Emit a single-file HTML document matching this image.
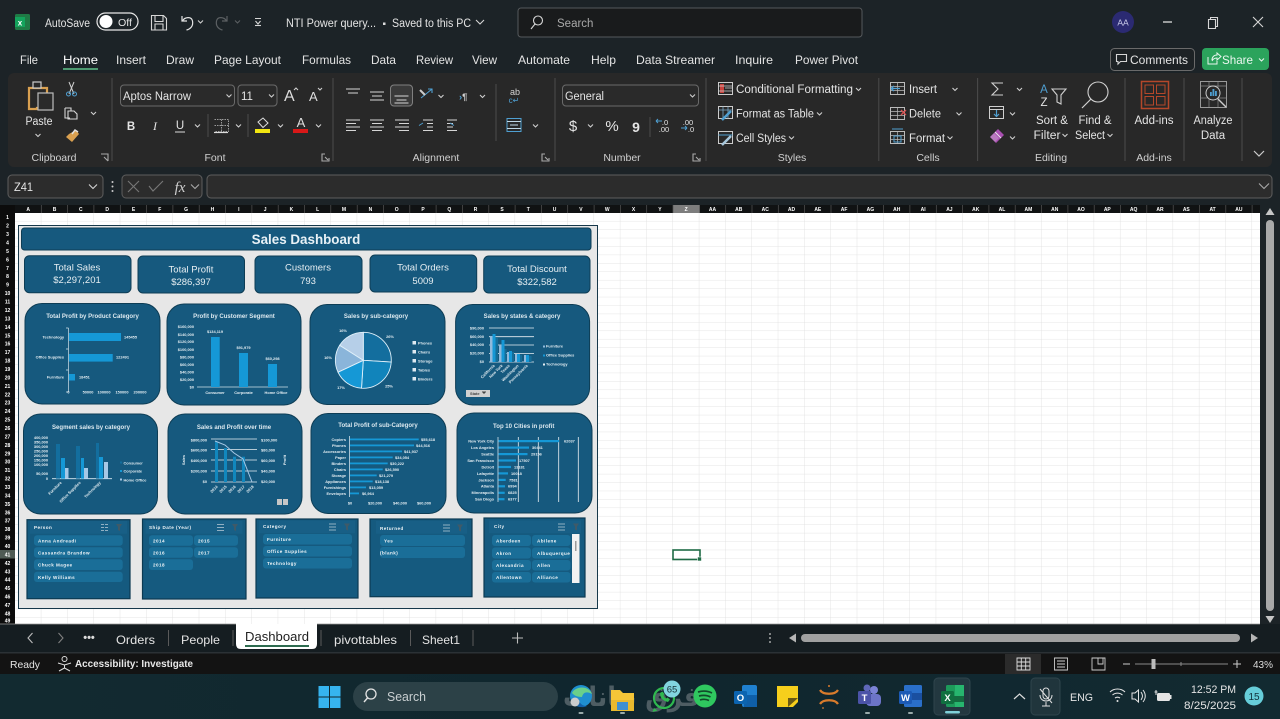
<!DOCTYPE html>
<html><head><meta charset="utf-8"><title>Excel Dashboard</title>
<style>
html,body{margin:0;padding:0;width:1280px;height:719px;overflow:hidden;background:#1c2327}
svg{display:block;position:absolute;left:0;top:0;filter:blur(.35px)}
text{font-family:"Liberation Sans","DejaVu Sans",sans-serif;fill:#e4e4e4;font-size:12px}
.m{text-anchor:middle}.e{text-anchor:end}
.s{font-size:11.5px}
.g{font-size:10.5px;fill:#d0d0d0;text-anchor:middle}
.h{font-size:5px;font-weight:bold;fill:#fff;text-anchor:middle}
.r{font-size:5px;font-weight:bold;fill:#fff;text-anchor:middle}
.ic{fill:none;stroke:#d6d6d6;stroke-width:1.1}
.ch{fill:none;stroke:#cfcfcf;stroke-width:1.1}
.sep{stroke:#4c4c4c;stroke-width:1}
.ca{fill:#16597e;stroke:#0e3d55;stroke-width:1}
.ti{font-size:6.05px;font-weight:bold;fill:#dbe8ef;text-anchor:middle}
.x{font-size:3.9px;font-weight:bold;fill:#e3edf2}
.k{font-size:9.5px;fill:#e6eef2;text-anchor:middle}
.it{fill:#1a6e98}
.sl{fill:#155a7f;stroke:#0c3a52;stroke-width:1.2}
.st{font-size:4.6px;font-weight:bold;fill:#f0f5f8;letter-spacing:.45px}
.b{fill:#1598d6}
.gl{stroke:#e8eef2;stroke-width:.8}
</style></head><body>
<svg width="1280" height="719" viewBox="0 0 1280 719" xmlns="http://www.w3.org/2000/svg">
<defs>
<pattern id="gp" x="15" y="213" width="26.32" height="8.43" patternUnits="userSpaceOnUse"><rect width="26.32" height="8.43" fill="#fff"/><path d="M26.32 0V8.43M0 8.43H26.32" stroke="#dedede" stroke-width=".8" fill="none"/></pattern>
<linearGradient id="tb" x1="0" x2="1" y1="0" y2="0"><stop offset="0" stop-color="#122a30"/><stop offset=".5" stop-color="#10262e"/><stop offset="1" stop-color="#122a31"/></linearGradient>
</defs>
<rect width="1280" height="719" fill="#1c2327"/>

<!-- title bar -->
<rect x="15" y="14" width="15" height="16" rx="1.5" fill="#1f7a45"/><rect x="15" y="17" width="10" height="10" fill="#14a35c"/><text x="20" y="25.5" class="m" style="font-size:8px;font-weight:bold;fill:#fff">x</text>
<text x="45" y="27" textLength="45" lengthAdjust="spacingAndGlyphs" style="font-size:11.5px">AutoSave</text>
<rect x="97" y="13" width="41" height="17" rx="8.5" fill="none" stroke="#e8e8e8" stroke-width="1.2"/><circle cx="106" cy="21.5" r="6.5" fill="#fff"/><text x="118" y="26" textLength="14" lengthAdjust="spacingAndGlyphs" style="font-size:10.5px">Off</text>
<path class="ic" d="M151.5 15.5h12l3 3v11.5h-15zM155 15.5v6h8v-6M155 30v-6h8v6"/>
<path d="M182 16v5h5M182.5 21c2-4 9-5 10-0s-2 8-6 9" fill="none" stroke="#e4e4e4" stroke-width="1.2"/><path class="ch" d="M198 20.5l2.5 2.5 2.5-2.5"/>
<path d="M227 16v5h-5M226.5 21c-2-4-9-5-10 0s2 8 6 9" fill="none" stroke="#5c6063" stroke-width="1.2"/><path d="M235 20.5l2.5 2.5 2.5-2.5" fill="none" stroke="#5c6063"/>
<path class="ic" d="M255 18.5h6M255.5 21l2.5 3 2.5-3"/><path d="M255 25.5h6" class="ic"/>
<text x="286" y="27" textLength="90" lengthAdjust="spacingAndGlyphs" style="font-size:11.5px">NTI Power query...</text><rect x="383" y="22.5" width="2.5" height="2.5" fill="#ddd"/>
<text x="392" y="27" textLength="79" lengthAdjust="spacingAndGlyphs" style="font-size:11.5px">Saved to this PC</text><path class="ic" d="M476 20l4 4 4-4"/>
<rect x="518" y="8" width="344" height="29" rx="3" fill="#191b1c" stroke="#55595c"/>
<circle cx="538" cy="20.5" r="4.5" class="ic" stroke="#b0b0b0"/><path class="ic" d="M535 24l-4 5"/>
<text x="557" y="27" style="font-size:11.5px;fill:#a9a9a9">Search</text>
<circle cx="1123" cy="22" r="11" fill="#2b2a72"/><text x="1123" y="25.5" class="m" style="font-size:8.5px;fill:#cfd0ee">AA</text>
<path d="M1163 22h9" stroke="#ddd" stroke-width="1.3"/><path class="ic" d="M1208.5 19.5h7v9h-7zM1210.5 19.5v-2h7v9h-2"/><path class="ic" d="M1253 17l10 10M1263 17l-10 10" stroke-width="1.3"/>

<!-- tabs -->
<text x="20" y="64" textLength="18" lengthAdjust="spacingAndGlyphs">File</text>
<text x="63" y="64" textLength="35" lengthAdjust="spacingAndGlyphs" style="fill:#fff">Home</text>
<text x="116" y="64" textLength="30" lengthAdjust="spacingAndGlyphs">Insert</text>
<text x="166" y="64" textLength="28" lengthAdjust="spacingAndGlyphs">Draw</text>
<text x="214" y="64" textLength="67" lengthAdjust="spacingAndGlyphs">Page Layout</text>
<text x="302" y="64" textLength="49" lengthAdjust="spacingAndGlyphs">Formulas</text>
<text x="371" y="64" textLength="25" lengthAdjust="spacingAndGlyphs">Data</text>
<text x="416" y="64" textLength="37" lengthAdjust="spacingAndGlyphs">Review</text>
<text x="472" y="64" textLength="25" lengthAdjust="spacingAndGlyphs">View</text>
<text x="518" y="64" textLength="52" lengthAdjust="spacingAndGlyphs">Automate</text>
<text x="591" y="64" textLength="25" lengthAdjust="spacingAndGlyphs">Help</text>
<text x="636" y="64" textLength="79" lengthAdjust="spacingAndGlyphs">Data Streamer</text>
<text x="735" y="64" textLength="38" lengthAdjust="spacingAndGlyphs">Inquire</text>
<text x="795" y="64" textLength="63" lengthAdjust="spacingAndGlyphs">Power Pivot</text>
<rect x="63" y="68" width="35" height="2" fill="#4e9a71"/>
<rect x="1110.5" y="48.5" width="84" height="22" rx="4" fill="#1d2225" stroke="#6a6a6a"/>
<path class="ic" d="M1116.5 54.5h10v7h-6l-2.5 2.5v-2.5h-1.5z"/><text x="1130" y="64" textLength="58" lengthAdjust="spacingAndGlyphs">Comments</text>
<rect x="1202" y="48" width="67" height="22" rx="4" fill="#2ba35c"/>
<path d="M1208 57v7h9v-3M1212 60c0-3 2-5 5-5v-2l4 3.5-4 3.5v-2c-2 0-4 1-5 3" fill="none" stroke="#e8f5ee"/><text x="1222" y="64" textLength="31" lengthAdjust="spacingAndGlyphs" style="fill:#eaf6ef">Share</text><path d="M1259 58.5l2.5 2.5 2.5-2.5" fill="none" stroke="#eaf6ef"/>

<!-- ribbon -->
<rect x="8" y="73" width="1264" height="94" rx="6" fill="#282828"/>
<g class="sep"><path d="M112 78v83M333 78v83M555 78v83M706 78v83M878.8 78v83M977.6 78v83M1125 78v83M1184 78v83M1242 78v83M208 114v23M248 114v23M496 84v57M650 117v20"/></g>
<text class="g" x="54" y="161">Clipboard</text><text class="g" x="215" y="161">Font</text><text class="g" x="436" y="161">Alignment</text><text class="g" x="622" y="161">Number</text><text class="g" x="792" y="161">Styles</text><text class="g" x="928" y="161">Cells</text><text class="g" x="1051" y="161">Editing</text><text class="g" x="1154" y="161">Add-ins</text>
<g class="ic" stroke-width=".9" style="stroke:#aaa"><path d="M101 154h7v7M104 157l4 4M325 154h-3v7h7v-3M325 157l3 3M545 154h-3v7h7v-3M545 157l3 3M696 154h-3v7h7v-3M696 157l3 3"/></g>
<!-- clipboard -->
<path d="M29 88h18v20H37v1h-8z" fill="none" stroke="#d9a050" stroke-width="2.2"/><rect x="33" y="82" width="8" height="6" fill="#282828" stroke="#ccc" stroke-width="1.2"/><rect x="38" y="93" width="15" height="17" fill="#2a2a2a" stroke="#bdbdbd" stroke-width="1.2"/>
<text x="39" y="125" class="m" textLength="27" lengthAdjust="spacingAndGlyphs" style="font-size:11.5px">Paste</text><path class="ch" d="M35.5 134l2.5 2.5 2.5-2.5"/>
<path d="M69 82l5 12M74 82l-5 12" stroke="#cfcfcf" fill="none"/><circle cx="68.5" cy="94" r="2" fill="none" stroke="#4f9fd1"/><circle cx="74.5" cy="94" r="2" fill="none" stroke="#4f9fd1"/>
<path class="ic" d="M65 108v10h5M65 108h6v3M68 111h6l3 3v5h-9z"/><path class="ch" d="M91 112l2.5 2.5 2.5-2.5"/>
<path d="M66 137l6 5 7-8-3-4-7 4z" fill="#d9a050"/><path d="M72 134l3-4 3 2" fill="none" stroke="#e0e0e0" stroke-width="1.5"/>
<!-- font -->
<rect x="120.5" y="85" width="114" height="21" rx="3.5" fill="#2a2a2a" stroke="#6a6a6a"/><text x="123" y="100" textLength="68" lengthAdjust="spacingAndGlyphs" style="font-size:11.5px">Aptos Narrow</text><path class="ch" d="M226.5 94.5l2.5 2.5 2.5-2.5"/>
<rect x="238" y="85" width="39" height="21" rx="3.5" fill="#2a2a2a" stroke="#6a6a6a"/><text x="241" y="100" style="font-size:11.5px">11</text><path class="ch" d="M269 94.5l2.5 2.5 2.5-2.5"/>
<text x="284" y="101" style="font-size:16px;fill:#ddd">A</text><path class="ch" d="M294 90l2 -2 2 2" stroke="#c8c8c8"/><text x="309" y="101" style="font-size:13px;fill:#ddd">A</text><path class="ch" d="M318 88l2 2 2 -2"/>
<text x="131" y="130" class="m" style="font-weight:bold;font-size:11.5px">B</text><text x="155" y="130" class="m" style="font-style:italic;font-family:'Liberation Serif';font-size:12px">I</text><text x="180" y="129" class="m" style="font-size:11.5px">U</text><path d="M175 132h10" stroke="#ddd"/><path class="ch" d="M195 124.5l2.5 2.5 2.5-2.5M236 124.5l2.5 2.5 2.5-2.5M278 124.5l2.5 2.5 2.5-2.5M316 124.5l2.5 2.5 2.5-2.5"/>
<path d="M214.5 119.5h14v12h-14M221.5 119.5v12M214.5 125.5h14" fill="none" stroke="#9a9a9a" stroke-dasharray="1.5 1"/><path d="M214 132.5h14" stroke="#ddd" stroke-width="1.2"/>
<path d="M258 122l5-4 5 5-5 4.5z" fill="none" stroke="#ddd"/><rect x="255" y="129" width="15" height="4" fill="#f2e611"/>
<text x="301" y="127" class="m" style="font-size:13px;fill:#ddd">A</text><rect x="293" y="129" width="15" height="4" fill="#d81818"/>
<!-- alignment -->
<rect x="390.5" y="85" width="22" height="21" rx="3.5" fill="#3a3a3a" stroke="#808080"/>
<g class="ic"><path d="M346 89h14M348 93h10M370 92h14M372 96h10M370 100h14M394.5 96h14M396.5 100h10M394.5 103h14"/><path d="M346 120h14M346 123.5h10M346 127h14M346 130.5h10M370 120h14M372 123.5h10M370 127h14M372 130.5h10M395 120h14M399 123.5h10M395 127h14M399 130.5h10M423 120h10M423 130.5h10M427 123.5h6M427 127h6M447 120h10M447 130.5h10M447 123.5h6M447 127h6"/></g>
<path d="M419 125.5l4-2.5M454 125.5l-4-2.5" stroke="#4f9fd1" stroke-width="1" fill="none"/>
<path d="M421 98l11-9M428 89h4v4" fill="none" stroke="#4f9fd1" stroke-width="1.1"/><path d="M420 90l5 5" stroke="#ccc" stroke-width="2"/><path class="ch" d="M438.5 95l2.5 2.5 2.5-2.5M480 95l2.5 2.5 2.5-2.5M533 124.5l2.5 2.5 2.5-2.5"/>
<text x="459" y="100" style="font-size:9.5px;font-weight:bold;fill:#cfcfcf"><tspan fill="#4f9fd1">›</tspan>¶</text>
<text x="515" y="95" class="m" style="font-size:9px;fill:#d5d5d5">ab</text><text x="514" y="103" class="m" style="font-size:8px;fill:#4f9fd1">c↵</text>
<rect x="507" y="118.5" width="14" height="13" fill="none" stroke="#4f9fd1"/><path d="M507 121.5h14M507 128.5h14M510 125h8" fill="none" stroke="#bfd7e6"/>
<!-- number -->
<rect x="562.5" y="85" width="136" height="21" rx="3.5" fill="#2a2a2a" stroke="#6a6a6a"/><text x="565" y="100" textLength="39" lengthAdjust="spacingAndGlyphs" style="font-size:11.5px">General</text><path class="ch" d="M690 94.5l2.5 2.5 2.5-2.5"/>
<text x="573" y="131" class="m" style="font-size:15px">$</text><path class="ch" d="M588 124.5l2.5 2.5 2.5-2.5"/><text x="612" y="131" class="m" style="font-size:15px">%</text><text x="636" y="132" class="m" style="font-size:14px;font-weight:bold">9</text>
<text x="665" y="125" style="font-size:7.5px" class="m">.0</text><text x="664" y="132" style="font-size:7.5px" class="m">.00</text><path d="M662 121h-6M656 121l2-2M656 121l2 2" stroke="#4f9fd1" fill="none"/>
<text x="688" y="125" style="font-size:7.5px" class="m">.00</text><text x="691" y="132" style="font-size:7.5px" class="m">.0</text><path d="M681 128h6M687 128l-2-2M687 128l-2 2" stroke="#4f9fd1" fill="none"/>
<!-- styles -->
<rect x="718.5" y="82.5" width="14" height="12" fill="none" stroke="#ccc"/><rect x="720" y="84" width="4" height="9" fill="#c8413c"/><path d="M725 88h7M718.5 86h14M718.5 91h14" stroke="#ccc" stroke-width=".7"/>
<text x="736" y="93" textLength="117" lengthAdjust="spacingAndGlyphs" style="font-size:11.5px">Conditional Formatting</text><path class="ch" d="M856 88l2.5 2.5 2.5-2.5"/>
<rect x="718.5" y="106.5" width="14" height="12" fill="none" stroke="#ccc"/><path d="M718.5 110h14M723 106.5v12M728 106.5v12" stroke="#7aa9c9" stroke-width=".8"/><path d="M722 120l9-9" stroke="#4f9fd1" stroke-width="2.5"/>
<text x="736" y="117.5" textLength="78" lengthAdjust="spacingAndGlyphs" style="font-size:11.5px">Format as Table</text><path class="ch" d="M817 112.5l2.5 2.5 2.5-2.5"/>
<rect x="718.5" y="131.5" width="14" height="12" fill="none" stroke="#ccc"/><path d="M718.5 135h14" stroke="#4f9fd1"/><path d="M722 145l9-9" stroke="#a7c7dc" stroke-width="2.5"/>
<text x="736" y="142" textLength="50" lengthAdjust="spacingAndGlyphs" style="font-size:11.5px">Cell Styles</text><path class="ch" d="M789 136.5l2.5 2.5 2.5-2.5"/>
<!-- cells -->
<rect x="890.5" y="82.5" width="14" height="12" fill="none" stroke="#bbb"/><path d="M890.5 86.5h14M890.5 90.5h14M897.5 82.5v12" stroke="#bbb" stroke-width=".7"/><path d="M891 88.5h9M891 88.5l3-2.5M891 88.5l3 2.5" stroke="#4f9fd1" fill="none" stroke-width="1.3"/>
<text x="909" y="93" textLength="28" lengthAdjust="spacingAndGlyphs" style="font-size:11.5px">Insert</text><path class="ch" d="M952.5 88l2.5 2.5 2.5-2.5"/>
<rect x="890.5" y="107.5" width="14" height="12" fill="none" stroke="#bbb"/><path d="M890.5 111.5h14M890.5 115.5h14M897.5 107.5v12" stroke="#bbb" stroke-width=".7"/><path d="M901 110l5 5M906 110l-5 5" stroke="#d65050" fill="none" stroke-width="1.3"/>
<text x="909" y="117.5" textLength="32" lengthAdjust="spacingAndGlyphs" style="font-size:11.5px">Delete</text><path class="ch" d="M956.5 112.5l2.5 2.5 2.5-2.5"/>
<rect x="890.5" y="131.5" width="14" height="12" fill="none" stroke="#bbb"/><path d="M890.5 135.5h14M890.5 139.5h14M897.5 131.5v12" stroke="#bbb" stroke-width=".7"/><path d="M892 129h11" stroke="#4f9fd1"/><path d="M894 136h7v6h-7z" fill="none" stroke="#4f9fd1"/>
<text x="909" y="142" textLength="36" lengthAdjust="spacingAndGlyphs" style="font-size:11.5px">Format</text><path class="ch" d="M947.5 136.5l2.5 2.5 2.5-2.5"/>
<!-- editing -->
<path d="M1003 83h-11l6 6-6 6h11" fill="none" stroke="#d0d0d0" stroke-width="1.1"/><path class="ch" d="M1017 88l2.5 2.5 2.5-2.5M1010 112.5l2.5 2.5 2.5-2.5M1010 136.5l2.5 2.5 2.5-2.5"/>
<rect x="989.5" y="106.5" width="14" height="12" fill="none" stroke="#cfcfcf"/><path d="M989.5 109.5h14" stroke="#cfcfcf"/><path d="M996.5 110v6M994 114l2.5 2.5 2.5-2.5" stroke="#4f9fd1" fill="none" stroke-width="1.2"/>
<path d="M990 137l8-8 6 6-8 8z" fill="#a94fb2"/><path d="M995 132l6 6" stroke="#e8e8e8"/><path d="M994 133l-4 4 5 5 4-4z" fill="#ddd" opacity=".3"/>
<text x="1044" y="93" class="m" style="font-size:11.5px;fill:#4f9fd1">A</text><text x="1044" y="106" class="m" style="font-size:11.5px">Z</text>
<path d="M1052 89h14l-5 6v9l-4-2v-7z" fill="none" stroke="#d0d0d0" stroke-width="1.1"/>
<circle cx="1098" cy="92" r="10" fill="none" stroke="#d0d0d0" stroke-width="1.1"/><path d="M1091 99l-9 9" stroke="#d0d0d0" stroke-width="1.2"/>
<text x="1052" y="124" class="m" textLength="32" lengthAdjust="spacingAndGlyphs" style="font-size:11.5px">Sort &amp;</text><text x="1047" y="139" class="m" textLength="27" lengthAdjust="spacingAndGlyphs" style="font-size:11.5px">Filter</text><path class="ch" d="M1062.5 134l2.5 2.5 2.5-2.5"/>
<text x="1095" y="124" class="m" textLength="33" lengthAdjust="spacingAndGlyphs" style="font-size:11.5px">Find &amp;</text><text x="1090" y="139" class="m" textLength="30" lengthAdjust="spacingAndGlyphs" style="font-size:11.5px">Select</text><path class="ch" d="M1107.5 134l2.5 2.5 2.5-2.5"/>
<!-- add-ins -->
<rect x="1141.5" y="81.5" width="27" height="27" fill="none" stroke="#b5472a" stroke-width="1.5"/><rect x="1145" y="85" width="8.5" height="8.5" fill="none" stroke="#b5472a"/><rect x="1156.5" y="85" width="8.5" height="8.5" fill="none" stroke="#b5472a"/><rect x="1145" y="96.5" width="8.5" height="8.5" fill="none" stroke="#b5472a"/><rect x="1156.5" y="96.5" width="8.5" height="8.5" fill="none" stroke="#b5472a"/>
<text x="1154" y="124" class="m" textLength="39" lengthAdjust="spacingAndGlyphs" style="font-size:11.5px">Add-ins</text>
<rect x="1200.5" y="81.5" width="26" height="26" fill="none" stroke="#999"/><path d="M1200.5 86h26M1200.5 98h26M1209 82v25M1218 82v25" stroke="#888" stroke-width=".7"/><circle cx="1213" cy="93" r="7" fill="#282828" stroke="#ccc"/><rect x="1210" y="92" width="1.8" height="4" fill="#4f9fd1"/><rect x="1212.5" y="89" width="1.8" height="7" fill="#4f9fd1"/><rect x="1215" y="91" width="1.8" height="5" fill="#4f9fd1"/><path d="M1218 99l8 8" stroke="#ccc" stroke-width="1.4"/>
<text x="1213" y="124" class="m" textLength="39" lengthAdjust="spacingAndGlyphs" style="font-size:11.5px">Analyze</text><text x="1213" y="139" class="m" style="font-size:11.5px">Data</text>
<path d="M1254 151l5 5 5-5" fill="none" stroke="#ccc" stroke-width="1.2"/>

<!-- formula bar -->
<rect x="8" y="175" width="95" height="23" rx="4" fill="#2c2c2c" stroke="#5e5e5e"/><text x="14" y="191" textLength="19" lengthAdjust="spacingAndGlyphs">Z41</text><path class="ic" d="M89 184.5l4 4 4-4"/>
<circle cx="112.5" cy="182" r="1" fill="#ccc"/><circle cx="112.5" cy="186.5" r="1" fill="#ccc"/><circle cx="112.5" cy="191" r="1" fill="#ccc"/>
<rect x="122" y="175" width="80" height="23" rx="4" fill="#2c2c2c" stroke="#5e5e5e"/><path d="M128 181l11 11M139 181l-11 11M149 186l4 5 10-10" fill="none" stroke="#777" stroke-width="1.1"/>
<text x="180" y="192" class="m" style="font-family:'Liberation Serif';font-style:italic;font-size:15px;fill:#cfcfcf">fx</text><path class="ic" d="M191 184.5l4 4 4-4" style="stroke:#aaa"/>
<rect x="207" y="175" width="1065" height="23" rx="4" fill="#2c2c2c" stroke="#5e5e5e"/><path class="ic" d="M1259 183.5l5 5 5-5" style="stroke:#aaa"/>

<!-- grid and headers -->
<rect x="0" y="205" width="1280" height="8" fill="#101213"/>
<rect x="0" y="205" width="15" height="419" fill="#0c0c0c"/>
<rect x="15" y="213" width="1245" height="411" fill="url(#gp)"/>
<rect x="1260" y="205" width="20" height="419" fill="#1c2327"/>
<rect x="673" y="205" width="27" height="8" fill="#7d7d7d"/>
<rect x="0" y="550" width="15" height="8.5" fill="#4f5b54"/>
<path d="M41.3 205v8M67.6 205v8M93.9 205v8M120.3 205v8M146.6 205v8M172.9 205v8M199.2 205v8M225.6 205v8M251.9 205v8M278.2 205v8M304.5 205v8M330.8 205v8M357.2 205v8M383.5 205v8M409.8 205v8M436.1 205v8M462.5 205v8M488.8 205v8M515.1 205v8M541.4 205v8M567.7 205v8M594.1 205v8M620.4 205v8M646.7 205v8M673 205v8M699.4 205v8M725.7 205v8M752 205v8M778.3 205v8M804.6 205v8M831 205v8M857.3 205v8M883.6 205v8M909.9 205v8M936.3 205v8M962.6 205v8M988.9 205v8M1015.2 205v8M1041.5 205v8M1067.9 205v8M1094.2 205v8M1120.5 205v8M1146.8 205v8M1173.2 205v8M1199.5 205v8M1225.8 205v8M1252.1 205v8" stroke="#555" stroke-width=".7"/>
<g>
<text class="h" x="28.2" y="211">A</text><text class="h" x="54.5" y="211">B</text><text class="h" x="80.8" y="211">C</text><text class="h" x="107.2" y="211">D</text><text class="h" x="133.5" y="211">E</text><text class="h" x="159.8" y="211">F</text><text class="h" x="186.1" y="211">G</text><text class="h" x="212.4" y="211">H</text><text class="h" x="238.8" y="211">I</text><text class="h" x="265.1" y="211">J</text><text class="h" x="291.4" y="211">K</text><text class="h" x="317.7" y="211">L</text><text class="h" x="344" y="211">M</text><text class="h" x="370.4" y="211">N</text><text class="h" x="396.7" y="211">O</text><text class="h" x="423" y="211">P</text><text class="h" x="449.3" y="211">Q</text><text class="h" x="475.6" y="211">R</text><text class="h" x="502" y="211">S</text><text class="h" x="528.3" y="211">T</text><text class="h" x="554.6" y="211">U</text><text class="h" x="580.9" y="211">V</text><text class="h" x="607.2" y="211">W</text><text class="h" x="633.6" y="211">X</text><text class="h" x="659.9" y="211">Y</text><text class="h" x="686.2" y="211">Z</text><text class="h" x="712.5" y="211">AA</text><text class="h" x="738.8" y="211">AB</text><text class="h" x="765.2" y="211">AC</text><text class="h" x="791.5" y="211">AD</text><text class="h" x="817.8" y="211">AE</text><text class="h" x="844.1" y="211">AF</text><text class="h" x="870.4" y="211">AG</text><text class="h" x="896.8" y="211">AH</text><text class="h" x="923.1" y="211">AI</text><text class="h" x="949.4" y="211">AJ</text><text class="h" x="975.7" y="211">AK</text><text class="h" x="1002" y="211">AL</text><text class="h" x="1028.4" y="211">AM</text><text class="h" x="1054.7" y="211">AN</text><text class="h" x="1081" y="211">AO</text><text class="h" x="1107.3" y="211">AP</text><text class="h" x="1133.6" y="211">AQ</text><text class="h" x="1160" y="211">AR</text><text class="h" x="1186.3" y="211">AS</text><text class="h" x="1212.6" y="211">AT</text><text class="h" x="1238.9" y="211">AU</text>
</g>
<g>
<text class="r" x="7.5" y="219.2">1</text><text class="r" x="7.5" y="227.7">2</text><text class="r" x="7.5" y="236.1">3</text><text class="r" x="7.5" y="244.5">4</text><text class="r" x="7.5" y="253">5</text><text class="r" x="7.5" y="261.4">6</text><text class="r" x="7.5" y="269.8">7</text><text class="r" x="7.5" y="278.2">8</text><text class="r" x="7.5" y="286.7">9</text><text class="r" x="7.5" y="295.1">10</text><text class="r" x="7.5" y="303.5">11</text><text class="r" x="7.5" y="312">12</text><text class="r" x="7.5" y="320.4">13</text><text class="r" x="7.5" y="328.8">14</text><text class="r" x="7.5" y="337.3">15</text><text class="r" x="7.5" y="345.7">16</text><text class="r" x="7.5" y="354.1">17</text><text class="r" x="7.5" y="362.5">18</text><text class="r" x="7.5" y="371">19</text><text class="r" x="7.5" y="379.4">20</text><text class="r" x="7.5" y="387.8">21</text><text class="r" x="7.5" y="396.3">22</text><text class="r" x="7.5" y="404.7">23</text><text class="r" x="7.5" y="413.1">24</text><text class="r" x="7.5" y="421.6">25</text><text class="r" x="7.5" y="430">26</text><text class="r" x="7.5" y="438.4">27</text><text class="r" x="7.5" y="446.8">28</text><text class="r" x="7.5" y="455.3">29</text><text class="r" x="7.5" y="463.7">30</text><text class="r" x="7.5" y="472.1">31</text><text class="r" x="7.5" y="480.6">32</text><text class="r" x="7.5" y="489">33</text><text class="r" x="7.5" y="497.4">34</text><text class="r" x="7.5" y="505.9">35</text><text class="r" x="7.5" y="514.3">36</text><text class="r" x="7.5" y="522.7">37</text><text class="r" x="7.5" y="531.1">38</text><text class="r" x="7.5" y="539.6">39</text><text class="r" x="7.5" y="548">40</text><text class="r" x="7.5" y="556.4">41</text><text class="r" x="7.5" y="564.9">42</text><text class="r" x="7.5" y="573.3">43</text><text class="r" x="7.5" y="581.7">44</text><text class="r" x="7.5" y="590.2">45</text><text class="r" x="7.5" y="598.6">46</text><text class="r" x="7.5" y="607">47</text><text class="r" x="7.5" y="615.4">48</text><text class="r" x="7.5" y="622.5">49</text>
</g>
<!-- selected cell -->
<rect x="673" y="550" width="27" height="9.5" fill="none" stroke="#1e6b45" stroke-width="1.6"/><rect x="697.5" y="557" width="4" height="4" fill="#1e6b45" stroke="#fff" stroke-width=".6"/>
<!-- v scroll -->
<path d="M1270 208l-4.500 7h9z" fill="#c6c6c6"/><rect x="1266" y="220" width="8" height="391" rx="4" fill="#a9a9a9"/><path d="M1270 623l-4.500-7h9z" fill="#c6c6c6"/>

<!-- dashboard -->
<rect x="18.5" y="225.5" width="579" height="383" fill="#e7e7e7" stroke="#17384a" stroke-width="1"/>
<rect x="21.5" y="228" width="569.5" height="22" rx="3" fill="#16597e" stroke="#0e3d55"/>
<text x="306" y="244" class="m" style="font-size:13.4px;font-weight:bold;fill:#e8f1f6">Sales Dashboard</text>
<rect class="ca" x="24.5" y="255.7" width="106.5" height="37" rx="5"/><rect class="ca" x="138" y="256" width="106.5" height="37" rx="5"/><rect class="ca" x="255" y="256" width="107" height="37" rx="5"/><rect class="ca" x="370" y="255" width="106.7" height="37" rx="5"/><rect class="ca" x="483.7" y="256" width="106.3" height="37" rx="5"/>
<text class="k" x="77" y="270.5">Total Sales</text><text class="k" x="77" y="283">$2,297,201</text>
<text class="k" x="191" y="272.5">Total Profit</text><text class="k" x="191" y="285">$286,397</text>
<text class="k" x="308" y="270.5">Customers</text><text class="k" x="308" y="284">793</text>
<text class="k" x="423" y="270.5">Total Orders</text><text class="k" x="423" y="284">5009</text>
<text class="k" x="537" y="272">Total Discount</text><text class="k" x="537" y="285">$322,582</text>

<!-- chart cards -->
<rect class="ca" x="25" y="303.5" width="135" height="100.5" rx="17"/><rect class="ca" x="167" y="304" width="134" height="101" rx="17"/><rect class="ca" x="310" y="304.5" width="135" height="100" rx="17"/><rect class="ca" x="455.6" y="304.5" width="134" height="100.5" rx="17"/>
<rect class="ca" x="23.5" y="414" width="134" height="100" rx="17"/><rect class="ca" x="168" y="414" width="134" height="100" rx="17"/><rect class="ca" x="311" y="413.5" width="135" height="100" rx="17"/><rect class="ca" x="457" y="413" width="135" height="100" rx="17"/>

<!-- c1 -->
<text class="ti" x="92.5" y="318">Total Profit by Product Category</text>
<path d="M68.5 328v64M66 328h2.5M66 349h2.5M66 370h2.5M66 392h2.5" stroke="#cfe0ea" stroke-width=".7" fill="none"/>
<rect class="b" x="69" y="333" width="52" height="8"/><rect class="b" x="69" y="354" width="43.7" height="7.6"/><rect class="b" x="69" y="374" width="6" height="6.5"/>
<g class="x"><text class="x e" x="64" y="338.5">Technology</text><text class="x e" x="64" y="358.5">Office Supplies</text><text class="x e" x="64" y="378.5">Furniture</text><text class="x" x="124" y="338.5">145455</text><text class="x" x="116" y="358.5">122491</text><text class="x" x="79" y="378.5">18451</text><text class="x m" x="68.5" y="393.5">0</text><text class="x m" x="88" y="393.5">50000</text><text class="x m" x="104" y="393.5">100000</text><text class="x m" x="122" y="393.5">150000</text><text class="x m" x="140" y="393.5">200000</text></g>

<!-- c2 -->
<text class="ti" x="234" y="318">Profit by Customer Segment</text>
<g><text class="x e" x="194" y="328.2">$160,000</text><text class="x e" x="194" y="335.8">$140,000</text><text class="x e" x="194" y="343.2">$120,000</text><text class="x e" x="194" y="350.8">$100,000</text><text class="x e" x="194" y="358.5">$80,000</text><text class="x e" x="194" y="365.8">$60,000</text><text class="x e" x="194" y="373.5">$40,000</text><text class="x e" x="194" y="380.8">$20,000</text><text class="x e" x="194" y="388.5">$0</text></g>
<path d="M197 387h91" stroke="#cfe0ea" stroke-width=".8"/>
<rect class="b" x="211" y="337" width="8.7" height="50"/><rect class="b" x="239" y="353" width="9" height="34"/><rect class="b" x="268" y="364" width="9" height="23"/>
<text class="x m" x="215" y="333">$134,119</text><text class="x m" x="243.5" y="349">$91,979</text><text class="x m" x="272.5" y="360">$60,298</text>
<text class="x m" x="215" y="394">Consumer</text><text class="x m" x="243.5" y="394">Corporate</text><text class="x m" x="276" y="394">Home Office</text>

<!-- c3 pie -->
<text class="ti" x="376" y="318">Sales by sub-category</text>
<g stroke="#dff0fa" stroke-width=".9">
<path d="M363.3 360.3L363.3 332.3A28 28 0 0 1 391.2 362.1Z" fill="#136e9e"/>
<path d="M363.3 360.3L391.2 362.1A28 28 0 0 1 361.5 388.2Z" fill="#1184bb"/>
<path d="M363.3 360.3L361.5 388.2A28 28 0 0 1 338 372.2Z" fill="#1598d6"/>
<path d="M363.3 360.3L338 372.2A28 28 0 0 1 339.7 345.3Z" fill="#8ab5da"/>
<path d="M363.3 360.3L339.7 345.3A28 28 0 0 1 363.3 332.3Z" fill="#b6cfe8"/>
</g>
<text class="x m" x="390" y="338">26%</text><text class="x m" x="389" y="387.5">25%</text><text class="x m" x="341" y="389">17%</text><text class="x m" x="328" y="359">16%</text><text class="x m" x="343" y="332">16%</text>
<g fill="#dfeaf2"><rect x="412.5" y="341" width="3.5" height="3.5"/><rect x="412.5" y="350" width="3.5" height="3.5"/><rect x="412.5" y="359" width="3.5" height="3.5"/><rect x="412.5" y="368" width="3.5" height="3.5"/><rect x="412.5" y="377" width="3.5" height="3.5"/></g>
<text class="x" x="418" y="344.5">Phones</text><text class="x" x="418" y="353.5">Chairs</text><text class="x" x="418" y="362.5">Storage</text><text class="x" x="418" y="371.5">Tables</text><text class="x" x="418" y="380.5">Binders</text>

<!-- c4 -->
<text class="ti" x="522" y="318">Sales by states &amp; category</text>
<text class="x e" x="484" y="329.5">$90,000</text><text class="x e" x="484" y="338">$60,000</text><text class="x e" x="484" y="346">$40,000</text><text class="x e" x="484" y="354.5">$20,000</text><text class="x e" x="484" y="363">$0</text>
<path class="gl" d="M489 328h45M489 336.7h45M489 345h45M489 353.5h45M489 362h45"/>
<g fill="#8fb9dc"><rect x="490" y="336" width="2.5" height="26"/><rect x="499" y="345" width="2.5" height="17"/><rect x="507" y="352" width="2" height="10"/><rect x="515" y="354" width="2" height="8"/><rect x="524" y="355" width="2" height="7"/></g>
<g fill="#1598d6"><rect x="492.5" y="334" width="3" height="28"/><rect x="501.5" y="340" width="3" height="22"/><rect x="509" y="351" width="3" height="11"/><rect x="517" y="354" width="3" height="8"/><rect x="526" y="355" width="3" height="7"/></g>
<g fill="#156d98"><rect x="495.5" y="338" width="2.5" height="24"/><rect x="504.5" y="349" width="2" height="13"/><rect x="512" y="352" width="2" height="10"/><rect x="520" y="355" width="2" height="7"/><rect x="529" y="356" width="2.5" height="6"/></g>
<g><text class="x e" transform="translate(495 366) rotate(-45)">California</text><text class="x e" transform="translate(503 366) rotate(-45)">New York</text><text class="x e" transform="translate(510 366) rotate(-45)">Texas</text><text class="x e" transform="translate(519 366) rotate(-45)">Washington</text><text class="x e" transform="translate(528 366) rotate(-45)">Pennsylvania</text></g>
<rect x="543" y="345.5" width="2" height="2" fill="#8fb9dc"/><text class="x" x="546" y="347.5">Furniture</text><rect x="543" y="354.5" width="2" height="2" fill="#1598d6"/><text class="x" x="546" y="356.5">Office Supplies</text><rect x="543" y="363.5" width="2" height="2" fill="#e4edf2"/><text class="x" x="546" y="365.5">Technology</text>
<rect x="466" y="390" width="24" height="7" fill="#d0d0d0"/><text x="470" y="395" style="font-size:3.9px;font-weight:bold;fill:#444">State</text><path d="M482 392l2 2 2-2v-.5h-4z" fill="#444"/>

<!-- c5 -->
<text class="ti" x="91" y="429">Segment sales by category</text>
<g><text class="x e" x="48" y="439">400,000</text><text class="x e" x="48" y="443.5">350,000</text><text class="x e" x="48" y="448">300,000</text><text class="x e" x="48" y="452.5">250,000</text><text class="x e" x="48" y="457">200,000</text><text class="x e" x="48" y="461.5">150,000</text><text class="x e" x="48" y="466">100,000</text><text class="x e" x="48" y="475">50,000</text><text class="x e" x="48" y="480">0</text></g>
<path d="M52 478.7h60" stroke="#dcebf3" stroke-width=".8"/>
<g fill="#136e9e"><rect x="56" y="444" width="4" height="34.7"/><rect x="76" y="446" width="4" height="32.7"/><rect x="96" y="443" width="3" height="35.7"/></g>
<g fill="#1598d6"><rect x="61" y="458" width="4" height="20.7"/><rect x="81" y="458" width="3" height="20.7"/><rect x="99" y="457" width="4" height="21.7"/></g>
<g fill="#a6c8e6"><rect x="65" y="468" width="3.5" height="10.7"/><rect x="84" y="468" width="4" height="10.7"/><rect x="104" y="462" width="4" height="16.7"/></g>
<text class="x e" transform="translate(62 483) rotate(-45)">Furniture</text><text class="x e" transform="translate(81 483) rotate(-45)">Office Supplies</text><text class="x e" transform="translate(101 483) rotate(-45)">Technology</text>
<rect x="120" y="461.5" width="2" height="2" fill="#136e9e"/><text class="x" x="123.5" y="464.5">Consumer</text><rect x="120" y="470" width="2" height="2" fill="#1598d6"/><text class="x" x="123.5" y="472.5">Corporate</text><rect x="120" y="478.5" width="2" height="2" fill="#a6c8e6"/><text class="x" x="123.5" y="481.5">Home Office</text>

<!-- c6 -->
<text class="ti" x="234" y="429">Sales and Profit over time</text>
<text class="x e" x="207" y="441.5">$800,000</text><text class="x e" x="207" y="451.5">$600,000</text><text class="x e" x="207" y="462">$400,000</text><text class="x e" x="207" y="472.5">$200,000</text><text class="x e" x="207" y="483">$0</text>
<text class="x" x="261" y="441.5">$100,000</text><text class="x" x="261" y="451.5">$80,000</text><text class="x" x="261" y="462">$60,000</text><text class="x" x="261" y="472.5">$40,000</text><text class="x" x="261" y="483">$20,000</text>
<text class="x m" transform="translate(185 460) rotate(-90)">Sales</text><text class="x m" transform="translate(286 460) rotate(-90)">Profit</text>
<path class="gl" d="M211 439h46M211 449.5h46M211 460h46M211 471h46M211 482h46"/>
<g fill="#1187bd"><rect x="215" y="441.7" width="3" height="40.3"/><rect x="224" y="448" width="3" height="34"/><rect x="233" y="456.7" width="3" height="25.3"/><rect x="242" y="456.7" width="3" height="25.3"/></g>
<path d="M215 441l10 4 9 8 9 6 9 23" fill="none" stroke="#a6c8e6" stroke-width="1"/>
<text class="x e" transform="translate(218 487) rotate(-45)">2014</text><text class="x e" transform="translate(227 487) rotate(-45)">2015</text><text class="x e" transform="translate(236 487) rotate(-45)">2016</text><text class="x e" transform="translate(245 487) rotate(-45)">2017</text><text class="x e" transform="translate(254 487) rotate(-45)">2018</text>
<rect x="277" y="499" width="5" height="6" fill="#c6c6c6"/><rect x="283" y="499" width="5" height="6" fill="#c6c6c6"/>

<!-- c7 -->
<text class="ti" x="378" y="427">Total Profit of sub-Category</text>
<path d="M349.5 436v61" stroke="#cfe0ea" stroke-width=".8"/>
<g><rect class="b" x="350" y="438.5" width="68.7" height="1.8"/><rect class="b" x="350" y="444.5" width="64" height="1.8"/><rect class="b" x="350" y="450.5" width="52" height="1.8"/><rect class="b" x="350" y="456.5" width="42.7" height="1.8"/><rect class="b" x="350" y="462.5" width="37.7" height="1.8"/><rect class="b" x="350" y="468.5" width="32.7" height="1.8"/><rect class="b" x="350" y="474.5" width="26.7" height="1.8"/><rect class="b" x="350" y="480.5" width="22.7" height="1.8"/><rect class="b" x="350" y="486.5" width="16" height="1.8"/><rect class="b" x="350" y="492.5" width="9" height="1.8"/></g>
<g><text class="x e" x="346" y="441">Copiers</text><text class="x e" x="346" y="447">Phones</text><text class="x e" x="346" y="453">Accessories</text><text class="x e" x="346" y="459">Paper</text><text class="x e" x="346" y="465">Binders</text><text class="x e" x="346" y="471">Chairs</text><text class="x e" x="346" y="477">Storage</text><text class="x e" x="346" y="483">Appliances</text><text class="x e" x="346" y="489">Furnishings</text><text class="x e" x="346" y="495">Envelopes</text>
<text class="x" x="421" y="441">$55,618</text><text class="x" x="416" y="447">$44,516</text><text class="x" x="404" y="453">$41,937</text><text class="x" x="395" y="459">$34,054</text><text class="x" x="390" y="465">$30,222</text><text class="x" x="385" y="471">$26,590</text><text class="x" x="379" y="477">$21,279</text><text class="x" x="375" y="483">$18,138</text><text class="x" x="369" y="489">$13,059</text><text class="x" x="362" y="495">$6,964</text>
<text class="x m" x="350" y="504.5">$0</text><text class="x m" x="375" y="504.5">$20,000</text><text class="x m" x="400" y="504.5">$40,000</text><text class="x m" x="424" y="504.5">$60,000</text></g>

<!-- c8 -->
<text class="ti" x="523.7" y="428">Top 10 Cities in profit</text>
<path d="M498 437v65" stroke="#cfe0ea" stroke-width=".8"/>
<path class="gl" d="M518.3 437v65M538.3 437v65M558.7 437v65M578.3 437v65"/>
<rect class="b" x="498.5" y="440" width="60.5" height="2.2"/><rect class="b" x="498.5" y="446.5" width="30.5" height="2.2"/><rect class="b" x="498.5" y="453" width="29" height="2.2"/><rect class="b" x="498.5" y="459.4" width="17.5" height="2.2"/><rect class="b" x="498.5" y="465.9" width="12.5" height="2.2"/><rect class="b" x="498.5" y="472.3" width="9.5" height="2.2"/><rect class="b" x="498.5" y="478.8" width="7.2" height="2.2"/><rect class="b" x="498.5" y="485.2" width="6.5" height="2.2"/><rect class="b" x="498.5" y="491.7" width="6.2" height="2.2"/><rect class="b" x="498.5" y="498.1" width="6" height="2.2"/>
<g><text class="x e" x="494" y="442.5">New York City</text><text class="x e" x="494" y="449">Los Angeles</text><text class="x e" x="494" y="455.5">Seattle</text><text class="x e" x="494" y="461.9">San Francisco</text><text class="x e" x="494" y="468.4">Detroit</text><text class="x e" x="494" y="474.8">Lafayette</text><text class="x e" x="494" y="481.3">Jackson</text><text class="x e" x="494" y="487.7">Atlanta</text><text class="x e" x="494" y="494.2">Minneapolis</text><text class="x e" x="494" y="500.6">San Diego</text>
<text class="x" x="564" y="442.5">62037</text><text class="x" x="532" y="449">30441</text><text class="x" x="531" y="455.5">29156</text><text class="x" x="519" y="461.9">17507</text><text class="x" x="514" y="468.4">13181</text><text class="x" x="511" y="474.8">10018</text><text class="x" x="509" y="481.3">7581</text><text class="x" x="508" y="487.7">6994</text><text class="x" x="508" y="494.2">6825</text><text class="x" x="508" y="500.6">6377</text></g>

<!-- slicers -->
<rect class="sl" x="27" y="519.7" width="103" height="79"/><rect x="30" y="521" width="97" height="12.7" fill="#185f86"/>
<rect class="sl" x="142.5" y="519" width="103.5" height="80"/><rect x="145.5" y="521" width="97" height="12.7" fill="#185f86"/>
<rect class="sl" x="256" y="519" width="102" height="79"/><rect x="259" y="520.5" width="96" height="12.7" fill="#185f86"/>
<rect class="sl" x="370" y="519" width="102" height="77.7"/><rect x="376" y="521" width="91" height="12.7" fill="#185f86"/>
<rect class="sl" x="484" y="518" width="101" height="79"/><rect x="489" y="520.5" width="92" height="12.7" fill="#185f86"/>
<text class="st" x="34" y="529">Person</text><text class="st" x="149" y="529">Ship Date (Year)</text><text class="st" x="263" y="528">Category</text><text class="st" x="380" y="530">Returned</text><text class="st" x="494" y="528">City</text>
<g fill="none" stroke="#b9ccd8" stroke-width=".7"><path d="M101 524.5h3M105 524.5h3M101 527.5h3M105 527.5h3M101 530.5h3M105 530.5h3M217 524.5h7M217 527.5h7M217 530.5h7M329 524h7M329 527h7M329 530h7M443 525h7M443 528h7M443 531h7M558 524h7M558 527h7M558 530h7"/></g>
<g fill="#3f5a68"><path d="M116 524h6l-2 3v4l-2-1v-3zM232 524h6l-2 3v4l-2-1v-3zM344 523.5h6l-2 3v4l-2-1v-3zM457 524.5h6l-2 3v4l-2-1v-3zM573 523.5h6l-2 3v4l-2-1v-3z"/></g>
<g class="it"><rect x="34" y="535.3" width="88.7" height="10.4" rx="3"/><rect x="34" y="547.3" width="88.7" height="10.4" rx="3"/><rect x="34" y="559.3" width="88.7" height="10.7" rx="3"/><rect x="34" y="571.7" width="88.7" height="10.3" rx="3"/>
<rect x="149" y="535.3" width="44" height="10.4" rx="3"/><rect x="194" y="535.3" width="44" height="10.4" rx="3"/><rect x="149" y="547.3" width="44" height="10.4" rx="3"/><rect x="194" y="547.3" width="44" height="10.4" rx="3"/><rect x="149" y="559.3" width="44" height="10.7" rx="3"/>
<rect x="263" y="534" width="89" height="10.5" rx="3"/><rect x="263" y="546" width="89" height="10.5" rx="3"/><rect x="263" y="558" width="89" height="10.5" rx="3"/>
<rect x="380" y="535" width="85" height="11" rx="3"/><rect x="380" y="547" width="85" height="11" rx="3"/>
<rect x="492" y="535" width="39" height="11" rx="3"/><rect x="532" y="535" width="38.5" height="11" rx="3"/><rect x="492" y="547.5" width="39" height="11" rx="3"/><rect x="532" y="547.5" width="38.5" height="11" rx="3"/><rect x="492" y="560" width="39" height="10.5" rx="3"/><rect x="532" y="560" width="38.5" height="10.5" rx="3"/><rect x="492" y="572" width="39" height="10.5" rx="3"/><rect x="532" y="572" width="38.5" height="10.5" rx="3"/></g>
<g><text class="st" x="38" y="542.5">Anna Andreadi</text><text class="st" x="38" y="554.5">Cassandra Brandow</text><text class="st" x="38" y="566.7">Chuck Magee</text><text class="st" x="38" y="578.8">Kelly Williams</text>
<text class="st" x="153" y="542.5">2014</text><text class="st" x="198" y="542.5">2015</text><text class="st" x="153" y="554.5">2016</text><text class="st" x="198" y="554.5">2017</text><text class="st" x="153" y="566.7">2018</text>
<text class="st" x="267" y="541">Furniture</text><text class="st" x="267" y="553">Office Supplies</text><text class="st" x="267" y="565">Technology</text>
<text class="st" x="384" y="542.5">Yes</text><text class="st" x="380" y="554.5">(blank)</text>
<text class="st" x="496" y="542.5">Aberdeen</text><text class="st" x="537" y="542.5">Abilene</text><text class="st" x="496" y="554.8">Akron</text><text class="st" x="537" y="554.8">Albuquerque</text><text class="st" x="496" y="567">Alexandria</text><text class="st" x="537" y="567">Allen</text><text class="st" x="496" y="579">Allentown</text><text class="st" x="537" y="579">Alliance</text></g>
<rect x="572" y="534" width="7.5" height="49" fill="#f2f2f2"/><rect x="575" y="541" width="1.5" height="10" fill="#9a9a9a"/>

<!-- sheet tabs -->
<rect x="0" y="624" width="1280" height="29" fill="#151d21"/><path d="M0 624h236M317 624h943" stroke="#9a9a9a" stroke-width=".8"/>
<path d="M32.5 633l-4.500 5 4.500 5" fill="none" stroke="#bdbdbd" stroke-width="1.1"/><path d="M58.5 633l4.500 5-4.500 5" fill="none" stroke="#808080" stroke-width="1.1"/>
<text x="89" y="641" class="m" style="font-size:11px;font-weight:bold;fill:#ddd">•••</text>
<text x="116" y="644" textLength="39" lengthAdjust="spacingAndGlyphs">Orders</text><text x="181" y="644" textLength="39" lengthAdjust="spacingAndGlyphs">People</text>
<path d="M236 624v20q0 5 5 5h71q5 0 5-5v-20z" fill="#fff"/><text x="245" y="641" textLength="64" lengthAdjust="spacingAndGlyphs" style="fill:#222;font-size:12.5px">Dashboard</text><rect x="245" y="645" width="64" height="2" fill="#2d6b4f"/>
<text x="334" y="644" textLength="63" lengthAdjust="spacingAndGlyphs">pivottables</text><text x="422" y="644" textLength="38" lengthAdjust="spacingAndGlyphs">Sheet1</text>
<path d="M168.5 630v16M233 630v16M321 630v16M410.5 630v16M473 630v16" stroke="#5a5a5a"/>
<path d="M512 638h11M517.5 632.5v11" stroke="#bdbdbd" stroke-width="1.1"/>
<circle cx="770" cy="634" r=".9" fill="#ccc"/><circle cx="770" cy="638" r=".9" fill="#ccc"/><circle cx="770" cy="642" r=".9" fill="#ccc"/>
<path d="M789 638l7-4.500v9z" fill="#b5b5b5"/><rect x="801" y="634" width="439" height="8" rx="4" fill="#a0a0a0"/><path d="M1258 638l-7-4.500v9z" fill="#b5b5b5"/>

<!-- status bar -->
<rect x="0" y="653" width="1280" height="21" fill="#131313"/><rect x="0" y="652" width="1280" height="1.5" fill="#2b3135"/>
<rect x="1005" y="654" width="36" height="20" fill="#2b2b2b"/>
<text x="10" y="668" textLength="30" lengthAdjust="spacingAndGlyphs" style="font-size:10.5px">Ready</text>
<circle cx="64.5" cy="659" r="2.5" fill="none" stroke="#ddd"/><path d="M58 663l6.5 2 6.5-2M64.5 665v3M59 671l5.500-3 5.500 3" fill="none" stroke="#ddd"/>
<text x="75" y="667" textLength="118" lengthAdjust="spacingAndGlyphs" style="font-size:10.5px;font-weight:bold;fill:#e8e8e8">Accessibility: Investigate</text>
<path d="M1017 658h13v12h-13zM1017 662h13M1017 666h13M1021.3 658v12M1025.7 658v12" fill="none" stroke="#ddd" stroke-width=".9"/>
<path d="M1054.5 658h13v12h-13zM1057 661h8M1057 664h8M1057 667h8" fill="none" stroke="#ccc" stroke-width=".9"/>
<path d="M1092 658h13v12h-13zM1098 658v6h5v-6" fill="none" stroke="#ccc" stroke-width=".9"/>
<path d="M1123 664h7M1233 664h8M1237 660v8" stroke="#ccc"/><path d="M1135 664h93M1181 662v4" stroke="#888"/><rect x="1151.5" y="659" width="4" height="10" fill="#bbb"/>
<text x="1253" y="668" textLength="20" lengthAdjust="spacingAndGlyphs" style="font-size:10.5px;fill:#ddd">43%</text>

<!-- taskbar -->
<rect x="0" y="674" width="1280" height="45" fill="url(#tb)"/>
<text x="700" y="706" direction="rtl" textLength="137" lengthAdjust="spacingAndGlyphs" style="font-family:'DejaVu Sans',sans-serif;font-size:27px;font-weight:bold;fill:#8c9498;opacity:.5">فرق بيانات</text>
<g fill="#36b4ef"><rect x="318.5" y="686" width="10.5" height="10.5"/><rect x="330" y="686" width="10.5" height="10.5"/><rect x="318.5" y="697.5" width="10.5" height="10.5"/><rect x="330" y="697.5" width="10.5" height="10.5"/></g>
<rect x="353" y="682" width="205" height="29" rx="14.5" fill="#2c4147"/>
<circle cx="371" cy="694" r="5" fill="none" stroke="#e4e4e4" stroke-width="1.3"/><path d="M367.5 698l-3.500 4" stroke="#e4e4e4" stroke-width="1.4"/>
<text x="387" y="701" textLength="39" lengthAdjust="spacingAndGlyphs" style="font-size:12.5px;fill:#c9cfd1">Search</text>
<circle cx="581" cy="696" r="11" fill="#1f8fcf"/><path d="M572 693c3-7 17-8 20 1-5-3-9-2-10 3-6 0-8-2-10-4z" fill="#6ad08a"/><path d="M572 700c2 6 9 9 15 6-5 0-8-3-8-7z" fill="#1360a8"/><circle cx="575" cy="702" r="4.500" fill="#ccc"/>
<rect x="578.5" y="712" width="5" height="2" rx="1" fill="#9aa"/>
<path d="M611 690h9l3 3h11v18h-23z" fill="#f6c638"/><rect x="611" y="700" width="23" height="11" fill="#e9b92e"/><rect x="617" y="702" width="11" height="8" fill="#3f8fd0"/><rect x="620" y="712" width="5" height="2" rx="1" fill="#9aa"/>
<circle cx="664" cy="698" r="10" fill="none" stroke="#2fb84f" stroke-width="2.2"/><path d="M654 708l-1.500 4 5-1.500" fill="#2fb84f"/><path d="M660 693c0 5 3 8 8 9l2-2.500-2.500-2-1.500 1c-1-.5-2-1.500-2.500-3l1-1.500-2-2.500z" fill="#2fb84f"/>
<circle cx="672" cy="689" r="8.5" fill="#82d4df"/><text x="672" y="692.5" class="m" style="font-size:9.5px;fill:#163238">65</text>
<circle cx="705" cy="696" r="11.5" fill="#2fc85f"/><path d="M698 692c5-1.500 10-1 14 1M699 696c4-1 8-1 11.500 1M700 700c3-1 6-1 9 .5" fill="none" stroke="#124a2a" stroke-width="1.7"/>
<rect x="742" y="685" width="15" height="22" rx="2" fill="#1f80cf"/><rect x="744" y="695" width="13" height="12" fill="#0f5fa8"/><rect x="734" y="691" width="13" height="13" rx="1.5" fill="#0c64b0"/><text x="740.5" y="701" class="m" style="font-size:9.5px;font-weight:bold;fill:#fff">O</text>
<path d="M777 686h21v16l-5 5h-16z" fill="#f6cf1c"/><path d="M788 707v-9h10z" fill="#6b5a14"/>
<path d="M820 690c3 5 15 5 18 0M820 704c3-5 15-5 18 0" fill="none" stroke="#d97b2c" stroke-width="2.2"/><circle cx="829" cy="686" r="1" fill="#d97b2c"/><circle cx="823" cy="708" r="1" fill="#a96a34"/>
<circle cx="874" cy="690" r="4" fill="#7b83d6"/><circle cx="867" cy="688" r="3.5" fill="#5f67b8"/><rect x="866" y="694" width="15" height="12" rx="4" fill="#6c74c8"/><rect x="858" y="691" width="13" height="13" rx="1.5" fill="#4b53a8"/><text x="864.5" y="701" class="m" style="font-size:9.5px;font-weight:bold;fill:#fff">T</text>
<rect x="865" y="712" width="5" height="2" rx="1" fill="#9aa"/>
<rect x="904" y="685" width="18" height="22" rx="1.5" fill="#2a6fc9"/><rect x="904" y="693" width="18" height="7" fill="#1a4fa0"/><rect x="899" y="691" width="13" height="13" rx="1.5" fill="#1c5ab5"/><text x="905.5" y="701" class="m" style="font-size:9.5px;font-weight:bold;fill:#fff">W</text>
<rect x="908" y="712" width="5" height="2" rx="1" fill="#9aa"/>
<rect x="934" y="678" width="36" height="37" rx="4" fill="#233840" stroke="#2f454d"/>
<rect x="946" y="685" width="18" height="22" rx="1.5" fill="#1d9a5a"/><rect x="955" y="685" width="9" height="22" fill="#27b56e"/><rect x="946" y="696" width="18" height="6" fill="#146c40"/><rect x="941" y="691" width="13" height="13" rx="1.5" fill="#107040"/><text x="947.5" y="701" class="m" style="font-size:9.5px;font-weight:bold;fill:#fff">X</text>
<rect x="945" y="711" width="15" height="2.5" rx="1.2" fill="#7fd0d8"/>
<path d="M1014 699l5.500-5 5.500 5" fill="none" stroke="#ddd" stroke-width="1.2"/>
<rect x="1031" y="678" width="29" height="37" rx="4" fill="#20353c" stroke="#2f454d"/>
<rect x="1043" y="688" width="6" height="11" rx="3" fill="none" stroke="#e0e0e0"/><path d="M1040 695c0 8 12 8 12 0M1046 702v4M1042 706h8M1040 689l12 14" fill="none" stroke="#e0e0e0"/>
<text x="1070" y="701" textLength="23" lengthAdjust="spacingAndGlyphs" style="font-size:11px;fill:#e4e4e4">ENG</text>
<path d="M1110 692c4-4 11-4 15 0M1112.5 695c3-2.500 7-2.500 10 0M1115 698c1.500-1 3.500-1 5 0" fill="none" stroke="#e4e4e4" stroke-width="1.1"/><circle cx="1117.5" cy="701" r="1" fill="#e4e4e4"/>
<path d="M1132 693h3l3.500-3v12l-3.500-3h-3zM1141 692c2 3 2 5 0 8M1143 690c3 4 3 8 0 12" fill="none" stroke="#e4e4e4"/>
<rect x="1157" y="693" width="13" height="8" rx="1.5" fill="#e4e4e4"/><rect x="1170" y="695" width="1.5" height="4" fill="#e4e4e4"/><path d="M1156 690v5M1154.5 692h3" stroke="#e4e4e4"/>
<text x="1236" y="693" class="e" textLength="45" lengthAdjust="spacingAndGlyphs" style="font-size:11px">12:52 PM</text>
<text x="1236" y="709" class="e" textLength="52" lengthAdjust="spacingAndGlyphs" style="font-size:11px">8/25/2025</text>
<circle cx="1254" cy="696" r="9.5" fill="#66cdd9"/><text x="1254" y="700" class="m" style="font-size:10px;fill:#12323a">15</text>
</svg>
</body></html>
